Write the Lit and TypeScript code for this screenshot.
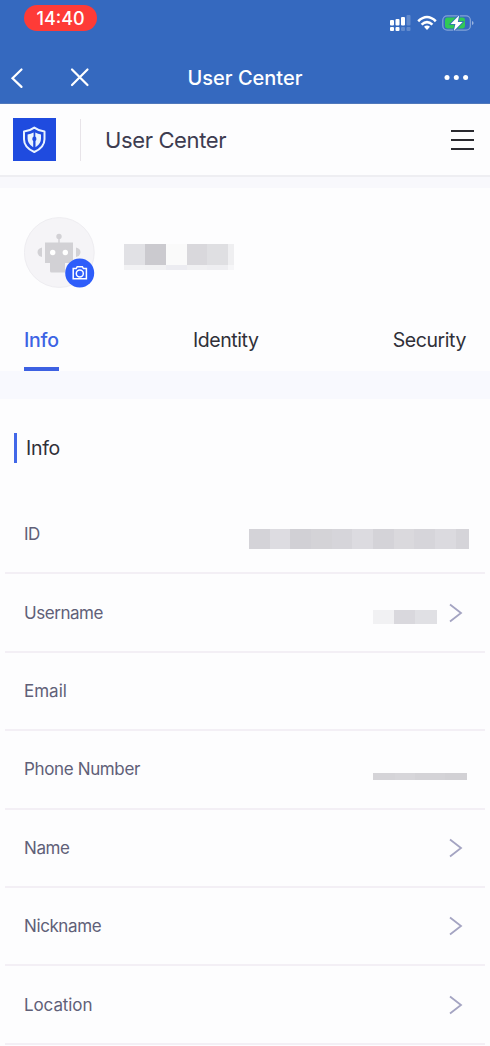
import { LitElement, html, css } from "lit";
import { customElement, property } from "lit/decorators.js";
import { styleMap } from "lit/directives/style-map.js";

type Block = [width: number, color: string];

const NAME_TOP: Block[] = [
  [21, "#e1e1e5"], [21, "#cbcacf"], [21, "#fafafa"], [20, "#d9d8dc"], [21, "#dfdfe2"], [6, "#efeff1"],
];
const NAME_BOTTOM: Block[] = [
  [21, "#f2f2f4"], [21, "#f1f1f3"], [21, "#ececf1"], [20, "#f0f0f2"], [21, "#eeeef1"], [6, "#f6f6f8"],
];
const ID_BLOCKS: Block[] = [
  [21, "#d4d3d8"], [20, "#dddce1"], [21, "#d1d0d5"], [21, "#d4d3d7"], [20, "#d6d5da"], [21, "#dcdbe0"],
  [21, "#d4d3d8"], [20, "#dad9dd"], [21, "#d6d5da"], [21, "#dbdadf"], [13, "#d5d4d9"],
];
const USERNAME_BLOCKS: Block[] = [[21, "#f1f1f3"], [21, "#d9d8dd"], [22, "#e0e0e4"]];
const PHONE_BLOCKS: Block[] = [[22, "#d5d4d8"], [20, "#d7d6da"], [30, "#d4d3d7"], [22, "#d2d1d5"]];

interface Row {
  label: string;
  spacing: string;
  blocks?: Block[];
  size?: number;
  drop?: number;
  arrow?: boolean;
}

const ROWS: Row[] = [
  { label: "ID", spacing: "-0.5px", blocks: ID_BLOCKS, size: 20, drop: 10 },
  { label: "Username", spacing: "-0.45px", blocks: USERNAME_BLOCKS, size: 14, drop: 9, arrow: true },
  { label: "Email", spacing: "0" },
  { label: "Phone Number", spacing: "-0.36px", blocks: PHONE_BLOCKS, size: 7, drop: 15 },
  { label: "Name", spacing: "-0.4px", arrow: true },
  { label: "Nickname", spacing: "-0.4px", arrow: true },
  { label: "Location", spacing: "-0.1px", arrow: true },
];

@customElement("mosaic-strip")
export class MosaicStrip extends LitElement {
  @property({ attribute: false }) blocks: Block[] = [];
  @property({ type: Number }) size = 20;

  static styles = css`
    :host { display: flex; }
    .block { flex: none; }
  `;

  render() {
    return this.blocks.map(
      ([w, c]) => html`<div class="block" style=${styleMap({ width: `${w}px`, height: `${this.size}px`, background: c })}></div>`,
    );
  }
}

@customElement("app-root")
export class AppRoot extends LitElement {
  static styles = css`
    :host {
      display: block;
      height: 1046px;
      overflow: hidden;
      background: #fdfdfe;
      font-family: Inter, "Liberation Sans", sans-serif;
      color: #303038;
    }
    * { box-sizing: border-box; }
    svg { display: block; flex: none; }
    .top { height: 104px; background: #3569bf; color: #fff; border-bottom: 1px solid #5078bb; }
    .status { display: flex; justify-content: space-between; height: 51px; padding: 5px 15px 0 24px; }
    .time {
      width: 73px; height: 26px; border-radius: 13px; background: #fe3b37;
      font-size: 18px; line-height: 27px; text-align: center; letter-spacing: 0; font-weight: 500;
    }
    .signals { margin-top: 9px; }
    .nav { display: grid; grid-template-columns: 150px 1fr 150px; height: 53px; padding-top: 1px; align-items: center; }
    .navleft { display: flex; padding-left: 10px; gap: 46px; }
    .navtitle { font-size: 20px; font-weight: 500; line-height: 24px; text-align: center; }
    .navmore { justify-self: end; margin-right: 21px; }
    .header { display: flex; align-items: center; height: 73px; padding: 0 16px 0 13px; border-bottom: 2px solid #eeeef2; }
    .logo { width: 43px; height: 43px; background: #1f4bdf; }
    .divider { width: 1px; height: 42px; margin: 0 24px; background: #e8e4e9; }
    .apptitle { flex: 1; font-size: 22px; line-height: 28px; letter-spacing: -0.38px; color: #3d3c50; }
    .band { height: 11px; background: #f8f8fc; }
    .band.wide { height: 28px; background: #f8f9fe; }
    .profile { display: flex; height: 122px; padding: 29px 24px 0; }
    .avatar { width: 72px; height: 72px; }
    .name { margin: 27px 0 0 28px; }
    .tabs { display: flex; justify-content: space-between; height: 61px; padding: 0 24px; }
    .tab { height: 61px; padding-top: 17px; font-size: 19.5px; line-height: 26px; letter-spacing: -0.42px; }
    .tab.active { letter-spacing: -0.25px; color: #3d63e4; font-weight: 500; border-bottom: 4px solid #3d61e2; }
    .section { display: flex; align-items: center; height: 97px; padding: 1px 0 0 14px; }
    .mark { width: 3px; height: 30px; background: #4268e8; }
    .sectitle { margin-left: 9px; font-size: 19.5px; line-height: 26px; letter-spacing: -0.3px; }
    .rows { padding: 0 5px; }
    .row {
      display: flex; align-items: center; height: 78.4px; padding: 0 18px 0 19px;
      border-bottom: 2px solid #f3eff5;
    }
    .label { flex: 1; font-size: 17px; line-height: 24px; color: #606078; }
    .arrow { margin: 0 4px 0 12px; }
  `;

  private statusIcons() {
    return html`<svg width="86" height="18" viewBox="0 0 86 18">
      <g fill="#fff">
        <rect x="1" y="6" width="4" height="5.5" rx="1" />
        <rect x="6.5" y="5" width="4" height="6.5" rx="1" />
        <rect x="12" y="3" width="4" height="8.5" rx="1" />
        <rect x="1" y="13" width="4" height="4" rx="1" />
        <rect x="6.5" y="13" width="4" height="4" rx="1" />
      </g>
      <g fill="#fff" opacity=".22">
        <rect x="17.5" y="1" width="4" height="10.5" rx="1" />
        <rect x="12" y="13" width="4" height="4" rx="1" />
        <rect x="17.5" y="13" width="4" height="4" rx="1" />
      </g>
      <g fill="none" stroke="#fff" stroke-width="2.6">
        <path d="M29.2 7.2Q38 -1.2 46.8 7.2" />
        <path d="M32.6 10.6Q38 5.6 43.4 10.6" />
      </g>
      <path d="M35 12.8Q38 10.4 41 12.8L38 16Z" fill="#fff" />
      <rect x="53.8" y="1.8" width="27.6" height="14.4" rx="4.4" fill="none" stroke="#fff" stroke-opacity=".38" stroke-width="1.3" />
      <rect x="56" y="3.5" width="20" height="11" rx="2.4" fill="#30c955" />
      <path d="M83 7v4q1.6-.6 1.6-2T83 7Z" fill="#fff" opacity=".5" />
      <path d="M70.2 1.3L61.6 9.9h4.8L64.8 17l8.800-9h-4.800Z" fill="#fff" stroke="#3569bf" stroke-width="1.6" paint-order="stroke" />
    </svg>`;
  }

  private avatar() {
    return html`<svg class="avatar" viewBox="0 0 72 72">
      <circle cx="35.300" cy="35.500" r="34.900" fill="#f5f4f7" stroke="#eeedf1" />
      <g fill="#d2d1d5">
        <circle cx="35" cy="19.500" r="2.700" />
        <rect x="34.300" y="20" width="1.400" height="7" />
        <path d="M21 25.500h28V46H41v9.500H27.500q-1.500 0-1.500-1.500V46h-5Z" />
        <path d="M18 30.500v9.500q-4.500-1-4.500-4.700T18 30.500ZM52 30.500v9.500q4.500-1 4.500-4.700T52 30.500Z" />
      </g>
      <circle cx="28.700" cy="35.500" r="2.700" fill="#fff" />
      <circle cx="41.300" cy="35.500" r="2.700" fill="#fff" />
      <circle cx="55.700" cy="56" r="14.500" fill="#2e5dfa" />
      <g fill="none" stroke="#fff" stroke-width="1.500">
        <path d="M49.200 51.500h3l1-1.800h5.200l1 1.800h3v10.200H49.200Z" />
        <circle cx="55.800" cy="56.400" r="3.500" />
      </g>
    </svg>`;
  }

  private logo() {
    return html`<svg class="logo" viewBox="0 0 43 43">
      <path d="M21.300 9.600q4.800 3.400 10.200 4v7.600q0 8.200-10.200 12.800Q11 29.400 11 21.200v-7.600q5.500-.6 10.300-4Z" fill="none" stroke="#eaf4ff" stroke-width="2" stroke-linejoin="round" />
      <path d="M20.600 14.600V18.600Q19.200 19.400 19.300 21.200 19.400 22.300 20.200 23V29.200Q14.600 25.800 14.600 20.400V16.600Q17.800 16.200 20.600 14.600Z" fill="#eaf4ff" />
      <path d="M22.300 14.600V18.600Q23.500 19.400 23.400 21.200 23.300 22.300 22.500 23V29.200Q28 25.800 28 20.400V16.600Q25 16.200 22.300 14.600Z" fill="#eaf4ff" />
    </svg>`;
  }

  private renderRow(r: Row) {
    return html`<div class="row">
      <span class="label" style=${styleMap({ letterSpacing: r.spacing })}>${r.label}</span>
      ${r.blocks
        ? html`<mosaic-strip
            .blocks=${r.blocks}
            .size=${r.size ?? 20}
            style=${styleMap({ marginTop: `${r.drop}px`, marginRight: r.label === "ID" ? "-2px" : "0" })}
          ></mosaic-strip>`
        : ""}
      ${r.arrow
        ? html`<svg class="arrow" width="14" height="20" viewBox="0 0 14 20">
            <path d="M1 1.500L12 10 1 18.500" fill="none" stroke="#a4a4c2" stroke-width="1.800" />
          </svg>`
        : ""}
    </div>`;
  }

  render() {
    return html`
      <div class="top">
        <div class="status">
          <div class="time">14:40</div>
          <div class="signals">${this.statusIcons()}</div>
        </div>
        <div class="nav">
          <div class="navleft">
            <svg width="14" height="22" viewBox="0 0 14 22"><path d="M11.500 2.500L2.500 11.200l9 8.700" fill="none" stroke="#fff" stroke-width="2.200" stroke-linecap="round" /></svg>
            <svg width="20" height="22" viewBox="0 0 20 22"><path d="M2 2.500l15.500 15.500M17.500 2.500l-15.500 15.500" fill="none" stroke="#fff" stroke-width="2.200" stroke-linecap="round" /></svg>
          </div>
          <div class="navtitle">User Center</div>
          <svg class="navmore" width="25" height="6" viewBox="0 0 25 6"><g fill="#fff"><circle cx="3" cy="2.500" r="2.500" /><circle cx="12.300" cy="2.500" r="2.500" /><circle cx="21.600" cy="2.500" r="2.500" /></g></svg>
        </div>
      </div>
      <div class="header">
        ${this.logo()}
        <div class="divider"></div>
        <div class="apptitle">User Center</div>
        <svg width="23" height="22" viewBox="0 0 23 22"><path d="M0 2h23M0 11h23M0 20h23" stroke="#29292f" stroke-width="2" /></svg>
      </div>
      <div class="band"></div>
      <div class="profile">
        ${this.avatar()}
        <div class="name">
          <mosaic-strip .blocks=${NAME_TOP} .size=${21}></mosaic-strip>
          <mosaic-strip .blocks=${NAME_BOTTOM} .size=${5}></mosaic-strip>
        </div>
      </div>
      <div class="tabs">
        <div class="tab active">Info</div>
        <div class="tab">Identity</div>
        <div class="tab">Security</div>
      </div>
      <div class="band wide"></div>
      <div class="section">
        <div class="mark"></div>
        <div class="sectitle">Info</div>
      </div>
      <div class="rows">${ROWS.map((r) => this.renderRow(r))}</div>
    `;
  }
}
